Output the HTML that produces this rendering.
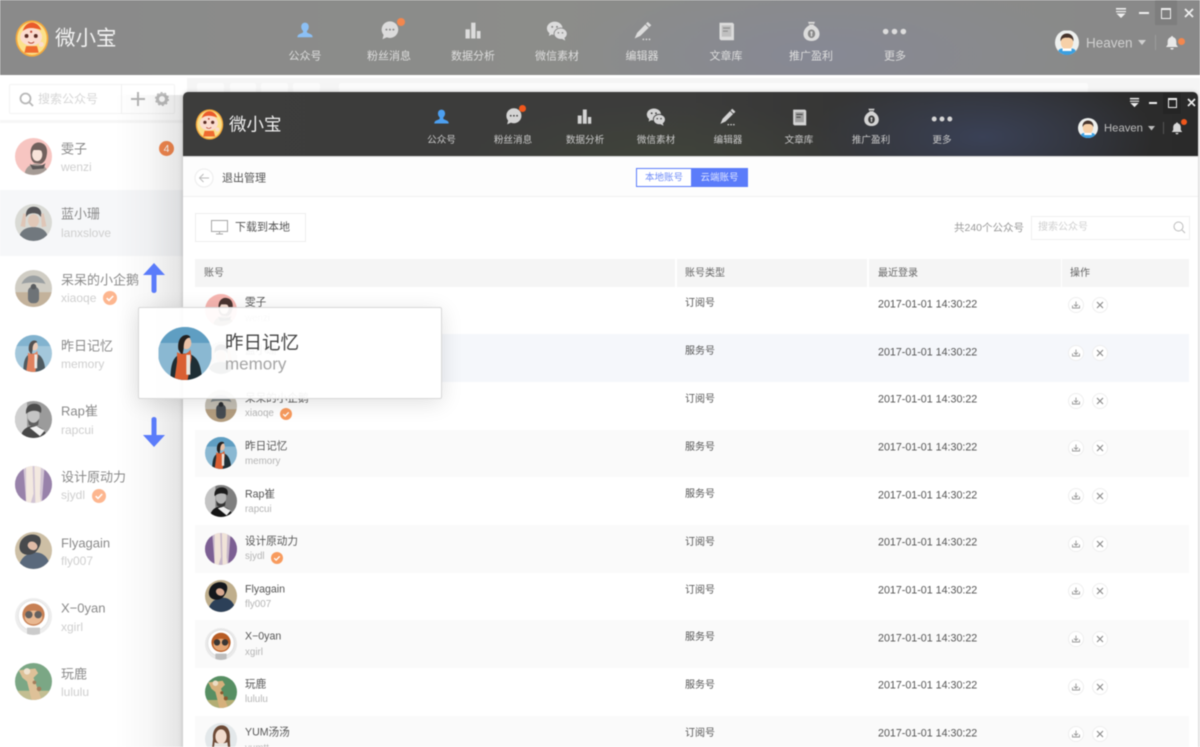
<!DOCTYPE html>
<html lang="zh-CN">
<head>
<meta charset="utf-8">
<title>微小宝</title>
<style>
html,body{margin:0;padding:0;width:1200px;height:747px;overflow:hidden;background:#fff}
body{font-family:"Liberation Sans","Noto Sans CJK SC",sans-serif}
#all{position:absolute;left:0;top:0;width:1200px;height:747px;overflow:hidden;filter:blur(.45px);background:#fff}
.a{position:absolute}
.t{position:absolute;white-space:nowrap;line-height:1;transform:translateY(calc(-50% + 1px))}
.c{position:absolute;white-space:nowrap;line-height:1;transform:translate(-50%,calc(-50% + 1px))}
svg{position:absolute;overflow:visible}
.av{border-radius:50%;overflow:hidden}
.bn{color:#8a8a8a;font-size:13px;transform:translateY(-50%)}
.bs{color:#cfcfcf;font-size:12px;transform:translateY(-50%)}
.nb{color:#ddd;font-size:11px}
.nf{color:#c9c9c9;font-size:9.6px}
.fn{color:#555;font-size:10.6px}
.fs{color:#b5b5b5;font-size:9.8px}
.ty{color:#555;font-size:10px}
.dt{color:#555;font-size:10.7px}
.th{color:#666;font-size:10px}
.act{position:absolute;width:16px;height:16px;border-radius:50%;border:1px solid #eee;background:#fff;box-sizing:border-box}
.bk{position:absolute;top:83px;height:12px;background:#fbfbfb;border-radius:2px 2px 0 0}
</style>
</head>
<body>
<svg width="0" height="0" style="position:absolute">
<defs>
<symbol id="i-person" viewBox="0 0 24 24"><path d="M12 2c2.900 0 4.500 2.300 4.500 5 0 2.100-1 3.900-2.200 4.900v1.500c0 1 3.800 1.700 5.700 3.300.9.800 1.100 2 1.100 2.800H2.900c0-.8.200-2 1.100-2.800 1.900-1.600 5.700-2.300 5.700-3.300v-1.500C8.500 10.900 7.500 9.100 7.500 7c0-2.700 1.600-5 4.500-5z" fill="currentColor"/></symbol>
<symbol id="i-chat" viewBox="0 0 24 24"><circle cx="12.500" cy="11" r="9.500" fill="currentColor"/><path d="M5.500 16l-1.500 6 6.500-3z" fill="currentColor"/><circle cx="8.500" cy="11" r="1.100" fill="var(--bg)"/><circle cx="12.500" cy="11" r="1.100" fill="var(--bg)"/><circle cx="16.500" cy="11" r="1.100" fill="var(--bg)"/></symbol>
<symbol id="i-bars" viewBox="0 0 24 24"><rect x="3" y="10" width="5.200" height="11" fill="currentColor"/><rect x="9.800" y="2" width="5.200" height="19" fill="currentColor"/><rect x="16.600" y="12" width="4.400" height="9" fill="currentColor"/></symbol>
<symbol id="i-wx" viewBox="0 0 24 24"><ellipse cx="9.500" cy="9" rx="8.500" ry="7.200" fill="currentColor"/><path d="M4 13l-.8 4.500 4.300-2.300z" fill="currentColor"/><circle cx="6.800" cy="7.500" r="1.100" fill="var(--bg)"/><circle cx="12" cy="7.500" r="1.100" fill="var(--bg)"/><ellipse cx="16" cy="15" rx="7.200" ry="6.200" fill="currentColor" stroke="var(--bg)" stroke-width="1"/><path d="M20 19l1 3.500-3.800-2z" fill="currentColor"/><circle cx="13.500" cy="14" r=".9" fill="var(--bg)"/><circle cx="18" cy="14" r=".9" fill="var(--bg)"/></symbol>
<symbol id="i-pen" viewBox="0 0 24 24"><path d="M18 1l4 3.800L9.500 17 3 20l2.800-6.500z" fill="currentColor"/><path d="M15.500 3.500l4 4" stroke="var(--bg)" stroke-width="1" fill="none"/><circle cx="13" cy="21" r="1" fill="currentColor"/><circle cx="16.500" cy="21" r="1" fill="currentColor"/><circle cx="20" cy="21" r="1" fill="currentColor"/></symbol>
<symbol id="i-book" viewBox="0 0 24 24"><path d="M4 2h15l1.500 1.500V22H5.500L4 20.500z" fill="currentColor"/><rect x="6.500" y="5" width="11" height="13" fill="var(--bg)" opacity=".35"/><rect x="8" y="7.500" width="8" height="1.200" fill="var(--bg)"/><rect x="8" y="11" width="5.500" height="1.200" fill="var(--bg)"/></symbol>
<symbol id="i-bag" viewBox="0 0 24 24"><path d="M8 1h8l-1.700 3.800c4 1.800 6.900 5.700 6.900 10 0 5-4 8-9.200 8s-9.200-3-9.200-8c0-4.300 2.900-8.200 6.900-10z" fill="currentColor"/><rect x="9.500" y="3" width="5" height="1" fill="var(--bg)"/><ellipse cx="12" cy="14.500" rx="4.200" ry="5" fill="var(--bg)"/><circle cx="12" cy="13" r="1.300" fill="currentColor"/><rect x="11.200" y="14" width="1.600" height="3.500" fill="currentColor"/></symbol>
<symbol id="i-more" viewBox="0 0 24 24"><circle cx="3.500" cy="12" r="2.700" fill="currentColor"/><circle cx="12" cy="12" r="2.700" fill="currentColor"/><circle cx="20.500" cy="12" r="2.700" fill="currentColor"/></symbol>
<symbol id="i-bell" viewBox="0 0 24 24"><path d="M12 1.500c1 0 1.600.7 1.600 1.700 3.300.8 4.900 3.500 4.900 7v4.300l2.500 3.500H3l2.500-3.500v-4.300c0-3.500 1.600-6.200 4.900-7 0-1 .6-1.700 1.600-1.700z" fill="currentColor"/><path d="M9.500 19.500h5a2.500 2.500 0 0 1-5 0z" fill="currentColor"/></symbol>
<symbol id="i-filter" viewBox="0 0 12 12"><rect x="1" y="1" width="10" height="1.600" fill="currentColor"/><rect x="1" y="4" width="10" height="1.200" fill="currentColor"/><path d="M1.500 6.500h9L6 11z" fill="currentColor"/></symbol>
<symbol id="i-check" viewBox="0 0 14 14"><circle cx="7" cy="7" r="7" fill="currentColor"/><path d="M3.700 7.200l2.300 2.200 4.200-4.400" stroke="#fff" stroke-width="1.500" fill="none"/></symbol>
<symbol id="i-logo" viewBox="0 0 40 44"><ellipse cx="20" cy="22" rx="19.500" ry="21.500" fill="#f6a93b"/><ellipse cx="20" cy="22" rx="17.500" ry="19.500" fill="#fbe08a"/><path d="M9 13c2-7 7-10 11-10s9 3 11 9c-7-3-15-3-22 1z" fill="#ea5a2b"/><ellipse cx="19" cy="20" rx="13" ry="10.500" fill="#fbdccf"/><circle cx="13.500" cy="19" r="2.300" fill="#5b2d24"/><circle cx="24.500" cy="19" r="2.300" fill="#5b2d24"/><circle cx="19" cy="14" r="1.300" fill="#b8432e"/><path d="M15.500 26c2 2 5 2 7 0" stroke="#b8432e" stroke-width="1.200" fill="#fff"/><path d="M13 31h13l2 8H11z" fill="#ef6b2f"/><circle cx="31" cy="29" r="3" fill="#fbdccf"/></symbol>
<symbol id="i-me" viewBox="0 0 24 24"><rect width="24" height="24" fill="#eef0ee"/><rect x="3" y="18" width="18" height="8" rx="4" fill="#3b9fe0"/><ellipse cx="12" cy="12" rx="6.200" ry="7" fill="#f6d0a8"/><path d="M5.500 11c-.5-5 2.500-8 6.500-8s7 3 6.500 8c-1.200-3-3-4-6.500-3.800-3.500-.2-5.300.8-6.500 3.800z" fill="#46342c"/><rect x="7.500" y="18" width="9" height="2.500" fill="#fff"/></symbol>
<symbol id="a1" viewBox="0 0 40 40"><rect width="40" height="40" fill="#f6b5b0"/><path d="M10 40c1-8 6-12 13-12s12 4 14 12z" fill="#8d8078"/><path d="M17 18c-1-9 4-14 10-13 7 1 9 8 7 15-1 4-3 7-6 8l-7-1c-3-2-4-5-4-9z" fill="#4a3530"/><ellipse cx="24" cy="18" rx="5.500" ry="7" fill="#f7ddd0"/><path d="M18 13c3-4 9-4 12 1l-4-1z" fill="#4a3530"/><path d="M16 28c4 3 13 3 17-1l-2 6-12 1z" fill="#2f2a2a"/></symbol>
<symbol id="a2" viewBox="0 0 40 40"><rect width="40" height="40" fill="#d2d2cc"/><path d="M4 40c0-10 6-15 16-15s16 5 16 15z" fill="#4c555c"/><ellipse cx="20" cy="18" rx="6" ry="7" fill="#dcbba6"/><path d="M12 14c-1-7 3-11 8-11s10 3 8 11c-2-3-4-4-8-4s-6 1-8 4z" fill="#27272a"/><path d="M6 24l3-14 3 1-1 14zM34 24l-3-14-3 1 1 14z" fill="#d9b9a5"/></symbol>
<symbol id="a3" viewBox="0 0 40 40"><rect width="40" height="40" fill="#c4bfb4"/><rect y="24" width="40" height="16" fill="#b39d7f"/><path d="M7 15c3-7 9-9 13-9s10 2 13 9c-8-2-18-2-26 0z" fill="#808688"/><rect x="14" y="18" width="12" height="18" rx="5" fill="#464c52"/><circle cx="20" cy="18" r="3" fill="#2b2f33"/></symbol>
<symbol id="a4" viewBox="0 0 40 40"><rect width="40" height="40" fill="#8ab8d2"/><rect y="0" width="40" height="12" fill="#5f9ec2"/><path d="M9 40c0-12 2-20 11-20s12 8 13 20z" fill="#1e2e35"/><ellipse cx="21" cy="12" rx="3.800" ry="4.800" fill="#e8c0a6"/><path d="M15 17c-1-8 3-11 6-11 2 0 3 1 3 2-4 0-5 4-5 8l-1 6z" fill="#23201f"/><path d="M14 19c3 2 8 2 10-2l1 6-3 17H12l2-14z" fill="#d95f33"/><rect x="21" y="21" width="3" height="15" fill="#e9e5df"/></symbol>
<symbol id="a5" viewBox="0 0 40 40"><rect width="40" height="40" fill="#7f7f7f"/><rect x="0" width="13" height="40" fill="#c4c4c4"/><path d="M6 40c1-9 7-13 14-13s13 4 15 13z" fill="#151515"/><path d="M16 29l7-2 9 5-5 6z" fill="#eee"/><ellipse cx="20" cy="16" rx="6.500" ry="9" fill="#b4b4b4"/><path d="M12 14c-1-8 4-11 9-11s9 3 7 10c-3-3-11-4-16 1z" fill="#1c1c1c"/><path d="M14 19c3 6 9 6 12 0l-1 7-5 2-5-2z" fill="#333"/></symbol>
<symbol id="a6" viewBox="0 0 40 40"><rect width="40" height="40" fill="#c6b6c9"/><path d="M0 8l9-8 3 40H0zM40 12l-8-12-3 40h11z" fill="#7c5f93"/><path d="M12 0h7l1 30-3 10h-5zM21 0h7l-1 30 1 10h-6z" fill="#f0e3d8"/></symbol>
<symbol id="a7" viewBox="0 0 40 40"><rect width="40" height="40" fill="#bfae8c"/><path d="M4 40c0-10 8-18 18-18s16 8 16 18z" fill="#2c4058"/><path d="M5 14C7 3 20 0 26 5c4 4 1 12-4 17-6 5-19 3-17-8z" fill="#15181c"/><ellipse cx="19" cy="15" rx="5.500" ry="4.500" fill="#d7a88f" transform="rotate(25 19 15)"/></symbol>
<symbol id="a8" viewBox="0 0 40 40"><rect width="40" height="40" fill="#e9e9e9"/><circle cx="20" cy="19" r="16.500" fill="#fff" stroke="#ddd"/><circle cx="20" cy="18" r="12" fill="#b85d25"/><ellipse cx="20" cy="21" rx="9.500" ry="7.500" fill="#e4a573"/><circle cx="15" cy="18" r="4" fill="#3a3633"/><circle cx="25" cy="18" r="4" fill="#3a3633"/><rect x="13" y="32" width="14" height="8" fill="#bdbdbd"/></symbol>
<symbol id="a9" viewBox="0 0 40 40"><rect width="40" height="40" fill="#578f63"/><rect y="30" width="40" height="10" fill="#b3ad74"/><path d="M4 8l8-1 10-1 3 5-5 5 9 24H18l-5-20-5-4z" fill="#d6b07c"/><circle cx="13" cy="9" r="3.500" fill="#ecdcc4"/><circle cx="26" cy="28" r="2.500" fill="#8a5a30"/><circle cx="21" cy="21" r="2" fill="#8a5a30"/></symbol>
<symbol id="a10" viewBox="0 0 40 40"><rect width="40" height="40" fill="#e3e8ea"/><path d="M10 20C9 8 15 3 21 3s11 5 10 17l1 20H8z" fill="#6d4a36"/><ellipse cx="20" cy="17" rx="7" ry="9" fill="#f2dccd"/><path d="M12 24c4 2 11 2 16 0l2 16H10z" fill="#e8e5e0"/></symbol>
</defs>
</svg>
<div id="all">

<!-- back window -->
<div class="a" style="left:0;top:0;width:1200px;height:75px;background:radial-gradient(ellipse 260px 80px at 820px 55px,#878995 0%,rgba(135,137,149,0) 100%),linear-gradient(90deg,#8a8a8a,#8c8d8a 45%,#898989 100%);--bg:#8a8a8a"></div>
<div class="a" style="left:0;top:75px;width:1200px;height:3px;background:#fff"></div>
<div class="a" style="left:187px;top:78px;width:1013px;height:669px;background:#f5f5f5"></div>
<div class="bk" style="left:197px;width:27px"></div><div class="bk" style="left:230px;width:26px"></div><div class="bk" style="left:261px;width:27px"></div><div class="bk" style="left:293px;width:27px"></div><div class="bk" style="left:339px;width:749px"></div>

<svg style="left:15px;top:20px" width="34" height="37"><use href="#i-logo"/></svg>
<div class="t" style="left:55px;top:38px;font-size:20.500px;color:#f2f2f2">微小宝</div>

<div style="color:#dcdcdc;--bg:#8a8a8a">
<svg style="left:295px;top:21px;color:#8cc0f5" width="20" height="20"><use href="#i-person"/></svg>
<svg style="left:379px;top:20px" width="21" height="21"><use href="#i-chat"/></svg>
<svg style="left:463px;top:21px" width="20" height="20"><use href="#i-bars"/></svg>
<svg style="left:546px;top:20px" width="22" height="22"><use href="#i-wx"/></svg>
<svg style="left:632px;top:21px" width="21" height="21"><use href="#i-pen"/></svg>
<svg style="left:716px;top:21px" width="21" height="21"><use href="#i-book"/></svg>
<svg style="left:801px;top:21px" width="21" height="21"><use href="#i-bag"/></svg>
<svg style="left:882px;top:19px" width="25" height="25"><use href="#i-more"/></svg>
</div>
<div class="a" style="left:397px;top:18px;width:8px;height:8px;border-radius:50%;background:#f3874e"></div>
<div class="c nb" style="left:305px;top:56px">公众号</div>
<div class="c nb" style="left:389px;top:56px">粉丝消息</div>
<div class="c nb" style="left:473px;top:56px">数据分析</div>
<div class="c nb" style="left:557px;top:56px">微信素材</div>
<div class="c nb" style="left:642px;top:56px">编辑器</div>
<div class="c nb" style="left:726px;top:56px">文章库</div>
<div class="c nb" style="left:811px;top:56px">推广盈利</div>
<div class="c nb" style="left:895px;top:56px">更多</div>

<div class="a" style="left:1155px;top:0;width:22px;height:25px;background:#7e7e7e"></div>
<svg style="left:1115px;top:7px;color:#eee" width="12" height="12"><use href="#i-filter"/></svg>
<div class="a" style="left:1139px;top:12px;width:10px;height:2px;background:#eee"></div>
<div class="a" style="left:1161px;top:8px;width:8px;height:8px;border:1.500px solid #eee;border-top-width:2.500px"></div>
<svg style="left:1184px;top:8px" width="10" height="10"><path d="M1 1l8 8M9 1l-8 8" stroke="#eee" stroke-width="1.800"/></svg>

<svg class="av" style="left:1055px;top:30px" width="24" height="25"><use href="#i-me"/></svg>
<div class="t" style="left:1086px;top:42px;font-size:13.500px;color:#cfcfcf">Heaven</div>
<svg style="left:1138px;top:40px" width="8" height="6"><path d="M0 0h8L4 5z" fill="#cfcfcf"/></svg>
<div class="a" style="left:1155px;top:35px;width:1px;height:15px;background:#9c9c9c"></div>
<svg style="left:1164px;top:35px;color:#e8e8e8" width="16" height="16"><use href="#i-bell"/></svg>
<div class="a" style="left:1178px;top:38px;width:7px;height:7px;border-radius:50%;background:#f3874e"></div>

<!-- sidebar -->
<div class="a" style="left:0;top:78px;width:187px;height:669px;background:#fff"></div>
<div class="a" style="left:0;top:120px;width:187px;height:3px;background:#f6f6f6"></div>
<div class="a" style="left:9px;top:84px;width:166px;height:30px;border:1px solid #f3f3f3;box-sizing:border-box;border-radius:2px"></div>
<div class="a" style="left:121px;top:84px;width:1px;height:30px;background:#f0f0f0"></div>
<svg style="left:19px;top:92px" width="15" height="15"><circle cx="6.500" cy="6.500" r="5" fill="none" stroke="#b8b8b8" stroke-width="1.800"/><path d="M10 10l4 4" stroke="#b8b8b8" stroke-width="1.800"/></svg>
<div class="t" style="left:38px;top:98px;font-size:12px;color:#d6d6d6">搜索公众号</div>
<svg style="left:131px;top:92px" width="14" height="14"><path d="M7 0v14M0 7h14" stroke="#b5b5b5" stroke-width="2"/></svg>
<svg style="left:155px;top:92px" width="14" height="14"><circle cx="7" cy="7" r="4.500" fill="none" stroke="#bdbdbd" stroke-width="3"/><circle cx="7" cy="7" r="6.300" fill="none" stroke="#bdbdbd" stroke-width="1.500" stroke-dasharray="2 2"/></svg>

<div class="a" style="left:0;top:190px;width:187px;height:66px;background:#f6f7f9"></div>

<div style="opacity:.78">
<svg class="av" style="left:15px;top:138px" width="37" height="37"><use href="#a1"/></svg>
<svg class="av" style="left:15px;top:204px" width="37" height="37"><use href="#a2"/></svg>
<svg class="av" style="left:15px;top:270px" width="37" height="37"><use href="#a3"/></svg>
<svg class="av" style="left:15px;top:335px" width="37" height="37"><use href="#a4"/></svg>
<svg class="av" style="left:15px;top:401px" width="37" height="37"><use href="#a5"/></svg>
<svg class="av" style="left:15px;top:466px" width="37" height="37"><use href="#a6"/></svg>
<svg class="av" style="left:15px;top:532px" width="37" height="37"><use href="#a7"/></svg>
<svg class="av" style="left:15px;top:598px" width="37" height="37"><use href="#a8"/></svg>
<svg class="av" style="left:15px;top:663px" width="37" height="37"><use href="#a9"/></svg>
</div>

<div class="t bn" style="left:61px;top:149px">雯子</div><div class="t bs" style="left:61px;top:167px">wenzi</div>
<div class="t bn" style="left:61px;top:214px">蓝小珊</div><div class="t bs" style="left:61px;top:233px">lanxslove</div>
<div class="t bn" style="left:61px;top:280px">呆呆的小企鹅</div><div class="t bs" style="left:61px;top:298px">xiaoqe</div>
<div class="t bn" style="left:61px;top:346px">昨日记忆</div><div class="t bs" style="left:61px;top:364px">memory</div>
<div class="t bn" style="left:61px;top:411px">Rap崔</div><div class="t bs" style="left:61px;top:430px">rapcui</div>
<div class="t bn" style="left:61px;top:477px">设计原动力</div><div class="t bs" style="left:61px;top:495px">sjydl</div>
<div class="t bn" style="left:61px;top:543px">Flyagain</div><div class="t bs" style="left:61px;top:561px">fly007</div>
<div class="t bn" style="left:61px;top:608px">X−0yan</div><div class="t bs" style="left:61px;top:627px">xgirl</div>
<div class="t bn" style="left:61px;top:674px">玩鹿</div><div class="t bs" style="left:61px;top:692px">lululu</div>

<div class="a" style="left:159px;top:141px;width:15px;height:15px;border-radius:50%;background:#f2874f"></div>
<div class="c" style="left:166.500px;top:148px;font-size:10.500px;color:#fff">4</div>
<svg style="left:103px;top:291px;color:#fdb68f" width="14" height="14"><use href="#i-check"/></svg>
<svg style="left:92px;top:489px;color:#fdb68f" width="14" height="14"><use href="#i-check"/></svg>

<!-- shadow cast on the sidebar -->
<div class="a" style="left:115px;top:95px;width:68px;height:652px;background:linear-gradient(90deg,rgba(0,0,0,0),rgba(0,0,0,.03) 50%,rgba(0,0,0,.11) 100%)"></div>

<!-- front window -->
<div class="a" style="left:183px;top:92px;width:1015px;height:660px;background:#fff;border-radius:5px 5px 0 0;box-shadow:0 0 5px rgba(0,0,0,.2)"></div>
<div class="a" style="left:183px;top:92px;width:1015px;height:64px;border-radius:5px 5px 0 0;background:radial-gradient(ellipse 170px 70px at 800px 45px,#3a4156 0%,rgba(58,65,86,0) 100%),radial-gradient(ellipse 200px 60px at 480px 70px,#40443a 0%,rgba(64,68,58,0) 100%),linear-gradient(90deg,#3d3d3c,#3c3c3b 50%,#303030 80%,#2a2a2a 100%)"></div>

<svg style="left:195px;top:109px" width="29" height="31"><use href="#i-logo"/></svg>
<div class="t" style="left:229px;top:124px;font-size:17.500px;color:#eee">微小宝</div>

<div style="color:#d4d4d4;--bg:#3c3c3c">
<svg style="left:432px;top:108px;color:#4c9ff0" width="19" height="19"><use href="#i-person"/></svg>
<svg style="left:504px;top:107px" width="19" height="19"><use href="#i-chat"/></svg>
<svg style="left:575px;top:108px" width="19" height="18"><use href="#i-bars"/></svg>
<svg style="left:646px;top:107px" width="20" height="20"><use href="#i-wx"/></svg>
<svg style="left:718px;top:108px" width="19" height="19"><use href="#i-pen"/></svg>
<svg style="left:790px;top:108px" width="19" height="19"><use href="#i-book"/></svg>
<svg style="left:862px;top:108px" width="19" height="19"><use href="#i-bag"/></svg>
<svg style="left:931px;top:108px" width="22" height="22"><use href="#i-more"/></svg>
</div>
<div class="a" style="left:519px;top:105px;width:7px;height:7px;border-radius:50%;background:#f0571c"></div>
<div class="c nf" style="left:441.500px;top:139.500px">公众号</div>
<div class="c nf" style="left:513px;top:139.500px">粉丝消息</div>
<div class="c nf" style="left:585px;top:139.500px">数据分析</div>
<div class="c nf" style="left:656px;top:139.500px">微信素材</div>
<div class="c nf" style="left:728px;top:139.500px">编辑器</div>
<div class="c nf" style="left:799px;top:139.500px">文章库</div>
<div class="c nf" style="left:871px;top:139.500px">推广盈利</div>
<div class="c nf" style="left:942px;top:139.500px">更多</div>

<div class="a" style="left:1163px;top:93px;width:18px;height:21px;background:#252525"></div>
<svg style="left:1129px;top:97px;color:#eee" width="11" height="11"><use href="#i-filter"/></svg>
<div class="a" style="left:1149px;top:101.500px;width:8px;height:2px;background:#eee"></div>
<div class="a" style="left:1168px;top:98px;width:7px;height:7px;border:1.200px solid #eee;border-top-width:2.200px"></div>
<svg style="left:1187px;top:98px" width="9" height="9"><path d="M1 1l7 7M8 1l-7 7" stroke="#eee" stroke-width="1.600"/></svg>

<svg class="av" style="left:1078px;top:118px" width="20" height="20"><use href="#i-me"/></svg>
<div class="t" style="left:1104px;top:128px;font-size:11.300px;color:#bcbcbc">Heaven</div>
<svg style="left:1148px;top:126px" width="7" height="5"><path d="M0 0h7L3.500 4.500z" fill="#bcbcbc"/></svg>
<div class="a" style="left:1163px;top:122px;width:1px;height:12px;background:#555"></div>
<svg style="left:1170px;top:121px;color:#d8d8d8" width="14" height="15"><use href="#i-bell"/></svg>
<div class="a" style="left:1181px;top:119px;width:6px;height:6px;border-radius:50%;background:#f0571c"></div>

<!-- sub header -->
<div class="a" style="left:183px;top:156px;width:1015px;height:41px;background:#fdfdfd;border-bottom:1px solid #f0f0f0;border-top:1px solid #ddd;box-sizing:border-box"></div>
<svg style="left:194px;top:168px" width="20" height="20"><circle cx="10" cy="10" r="9" fill="#fff" stroke="#ececec"/><path d="M15 10H5.500M9.500 6l-4 4 4 4" stroke="#bbb" fill="none" stroke-width="1"/></svg>
<div class="t" style="left:222px;top:178px;font-size:11px;color:#555">退出管理</div>
<div class="a" style="left:636px;top:168px;width:56px;height:19px;border:1px solid #5b7cfa;box-sizing:border-box;background:#fff"></div>
<div class="a" style="left:691px;top:168px;width:57px;height:19px;background:#5b7cfa"></div>
<div class="c" style="left:664px;top:177px;font-size:9.500px;color:#6f8cf8">本地账号</div>
<div class="c" style="left:719.500px;top:177px;font-size:9.500px;color:#dfe5ff">云端账号</div>

<!-- toolbar -->
<div class="a" style="left:195px;top:213px;width:111px;height:29px;border:1px solid #eee;box-sizing:border-box;background:#fff"></div>
<svg style="left:211px;top:220px" width="18" height="15"><rect x=".5" y=".5" width="16" height="11" fill="none" stroke="#a8a8a8"/><path d="M8.500 12v2M5 14h7" stroke="#a8a8a8"/></svg>
<div class="t" style="left:235px;top:227px;font-size:11px;color:#555">下载到本地</div>
<div class="t" style="left:954px;top:227px;font-size:10.500px;color:#999">共240个公众号</div>
<div class="a" style="left:1031px;top:216px;width:159px;height:24px;border:1px solid #f0f0f0;box-sizing:border-box"></div>
<div class="t" style="left:1038px;top:227px;font-size:10px;color:#d0d0d0">搜索公众号</div>
<svg style="left:1173px;top:221px" width="13" height="13"><circle cx="5.500" cy="5.500" r="4.500" fill="none" stroke="#bbb"/><path d="M9 9l3 3" stroke="#bbb"/></svg>

<!-- table -->
<div class="a" style="left:195px;top:259px;width:480px;height:28px;background:#f5f5f5"></div>
<div class="a" style="left:677px;top:259px;width:190px;height:28px;background:#f5f5f5"></div>
<div class="a" style="left:869px;top:259px;width:192px;height:28px;background:#f5f5f5"></div>
<div class="a" style="left:1062px;top:259px;width:127px;height:28px;background:#f5f5f5"></div>
<div class="t th" style="left:204px;top:273px">账号</div>
<div class="t th" style="left:685px;top:273px">账号类型</div>
<div class="t th" style="left:878px;top:273px">最近登录</div>
<div class="t th" style="left:1070px;top:273px">操作</div>

<div class="a" style="left:195px;top:334px;width:994px;height:48px;background:#f5f7fb"></div>
<div class="a" style="left:195px;top:430px;width:994px;height:47px;background:#fafafa"></div>
<div class="a" style="left:195px;top:525px;width:994px;height:48px;background:#fafafa"></div>
<div class="a" style="left:195px;top:620px;width:994px;height:48px;background:#fafafa"></div>
<div class="a" style="left:195px;top:716px;width:994px;height:31px;background:#fafafa"></div>

<svg class="av" style="left:205px;top:294px" width="32" height="32"><use href="#a1"/></svg>
<svg class="av" style="left:205px;top:342px" width="32" height="32"><use href="#a2"/></svg>
<svg class="av" style="left:205px;top:390px" width="32" height="32"><use href="#a3"/></svg>
<svg class="av" style="left:205px;top:437px" width="32" height="32"><use href="#a4"/></svg>
<svg class="av" style="left:205px;top:485px" width="32" height="32"><use href="#a5"/></svg>
<svg class="av" style="left:205px;top:533px" width="32" height="32"><use href="#a6"/></svg>
<svg class="av" style="left:205px;top:580px" width="32" height="32"><use href="#a7"/></svg>
<svg class="av" style="left:205px;top:628px" width="32" height="32"><use href="#a8"/></svg>
<svg class="av" style="left:205px;top:676px" width="32" height="32"><use href="#a9"/></svg>
<svg class="av" style="left:205px;top:723px" width="32" height="32"><use href="#a10"/></svg>

<div class="t fn" style="left:245px;top:302px">雯子</div><div class="t fs" style="left:245px;top:318px">wenzi</div>
<div class="t fn" style="left:245px;top:350px">蓝小珊</div><div class="t fs" style="left:245px;top:366px">lanxslove</div>
<div class="t fn" style="left:245px;top:398px">呆呆的小企鹅</div><div class="t fs" style="left:245px;top:413px">xiaoqe</div>
<div class="t fn" style="left:245px;top:446px">昨日记忆</div><div class="t fs" style="left:245px;top:461px">memory</div>
<div class="t fn" style="left:245px;top:494px">Rap崔</div><div class="t fs" style="left:245px;top:509px">rapcui</div>
<div class="t fn" style="left:245px;top:541px">设计原动力</div><div class="t fs" style="left:245px;top:556px">sjydl</div>
<div class="t fn" style="left:245px;top:589px">Flyagain</div><div class="t fs" style="left:245px;top:604px">fly007</div>
<div class="t fn" style="left:245px;top:636px">X−0yan</div><div class="t fs" style="left:245px;top:652px">xgirl</div>
<div class="t fn" style="left:245px;top:684px">玩鹿</div><div class="t fs" style="left:245px;top:699px">lululu</div>
<div class="t fn" style="left:245px;top:732px">YUM汤汤</div><div class="t fs" style="left:245px;top:748px">yumtt</div>
<svg style="left:280px;top:408px;color:#f89b5e" width="12" height="12"><use href="#i-check"/></svg>
<svg style="left:271px;top:552px;color:#f89b5e" width="12" height="12"><use href="#i-check"/></svg>

<div class="t ty" style="left:685px;top:303px">订阅号</div><div class="t dt" style="left:878px;top:304px">2017-01-01 14:30:22</div>
<div class="t ty" style="left:685px;top:351px">服务号</div><div class="t dt" style="left:878px;top:352px">2017-01-01 14:30:22</div>
<div class="t ty" style="left:685px;top:399px">订阅号</div><div class="t dt" style="left:878px;top:399px">2017-01-01 14:30:22</div>
<div class="t ty" style="left:685px;top:447px">服务号</div><div class="t dt" style="left:878px;top:447px">2017-01-01 14:30:22</div>
<div class="t ty" style="left:685px;top:494px">服务号</div><div class="t dt" style="left:878px;top:495px">2017-01-01 14:30:22</div>
<div class="t ty" style="left:685px;top:542px">订阅号</div><div class="t dt" style="left:878px;top:542px">2017-01-01 14:30:22</div>
<div class="t ty" style="left:685px;top:590px">订阅号</div><div class="t dt" style="left:878px;top:590px">2017-01-01 14:30:22</div>
<div class="t ty" style="left:685px;top:637px">服务号</div><div class="t dt" style="left:878px;top:638px">2017-01-01 14:30:22</div>
<div class="t ty" style="left:685px;top:685px">服务号</div><div class="t dt" style="left:878px;top:685px">2017-01-01 14:30:22</div>
<div class="t ty" style="left:685px;top:733px">订阅号</div><div class="t dt" style="left:878px;top:733px">2017-01-01 14:30:22</div>

<!-- action buttons -->
<div class="act" style="left:1068px;top:297px"></div><div class="act" style="left:1092px;top:297px"></div>
<div class="act" style="left:1068px;top:345px"></div><div class="act" style="left:1092px;top:345px"></div>
<div class="act" style="left:1068px;top:393px"></div><div class="act" style="left:1092px;top:393px"></div>
<div class="act" style="left:1068px;top:440px"></div><div class="act" style="left:1092px;top:440px"></div>
<div class="act" style="left:1068px;top:488px"></div><div class="act" style="left:1092px;top:488px"></div>
<div class="act" style="left:1068px;top:536px"></div><div class="act" style="left:1092px;top:536px"></div>
<div class="act" style="left:1068px;top:583px"></div><div class="act" style="left:1092px;top:583px"></div>
<div class="act" style="left:1068px;top:631px"></div><div class="act" style="left:1092px;top:631px"></div>
<div class="act" style="left:1068px;top:679px"></div><div class="act" style="left:1092px;top:679px"></div>
<div class="act" style="left:1068px;top:726px"></div><div class="act" style="left:1092px;top:726px"></div>
<svg style="left:0;top:0" width="1200" height="747">
<defs><g id="dl"><path d="M-3.500 0.500v2.500h7v-2.500M0-3.500v5M-2 -.5l2 2 2-2" fill="none" stroke="#999" stroke-width=".9"/></g><g id="xx"><path d="M-3-3l6 6M3-3l-6 6" stroke="#888" stroke-width="1.100"/></g></defs>
<use href="#dl" x="1076" y="305"/><use href="#xx" x="1100" y="305"/>
<use href="#dl" x="1076" y="353"/><use href="#xx" x="1100" y="353"/>
<use href="#dl" x="1076" y="401"/><use href="#xx" x="1100" y="401"/>
<use href="#dl" x="1076" y="448"/><use href="#xx" x="1100" y="448"/>
<use href="#dl" x="1076" y="496"/><use href="#xx" x="1100" y="496"/>
<use href="#dl" x="1076" y="544"/><use href="#xx" x="1100" y="544"/>
<use href="#dl" x="1076" y="591"/><use href="#xx" x="1100" y="591"/>
<use href="#dl" x="1076" y="639"/><use href="#xx" x="1100" y="639"/>
<use href="#dl" x="1076" y="687"/><use href="#xx" x="1100" y="687"/>
<use href="#dl" x="1076" y="734"/><use href="#xx" x="1100" y="734"/>
</svg>

<!-- arrows -->
<svg style="left:143px;top:263px" width="22" height="30"><path d="M11 0l11 12h-8.500v16a2.500 2 0 0 1-5 0V12H0z" fill="#5b7cfa"/></svg>
<svg style="left:143px;top:417px" width="22" height="30"><path d="M11 30L0 18h8.500V2a2.500 2 0 0 1 5 0v16H22z" fill="#5b7cfa"/></svg>

<!-- drag popup -->
<div class="a" style="left:138px;top:307px;width:304px;height:92px;background:rgba(255,255,255,.93);border:1px solid #d8d8d8;box-sizing:border-box;border-radius:2px;box-shadow:0 4px 22px rgba(0,0,0,.12)"></div>
<svg class="av" style="left:158px;top:327px" width="54" height="53"><use href="#a4"/></svg>
<div class="t" style="left:225px;top:342px;font-size:18.500px;color:#444">昨日记忆</div>
<div class="t" style="left:225px;top:363px;font-size:17px;color:#a5a5a5">memory</div>

</div>
</body>
</html>
